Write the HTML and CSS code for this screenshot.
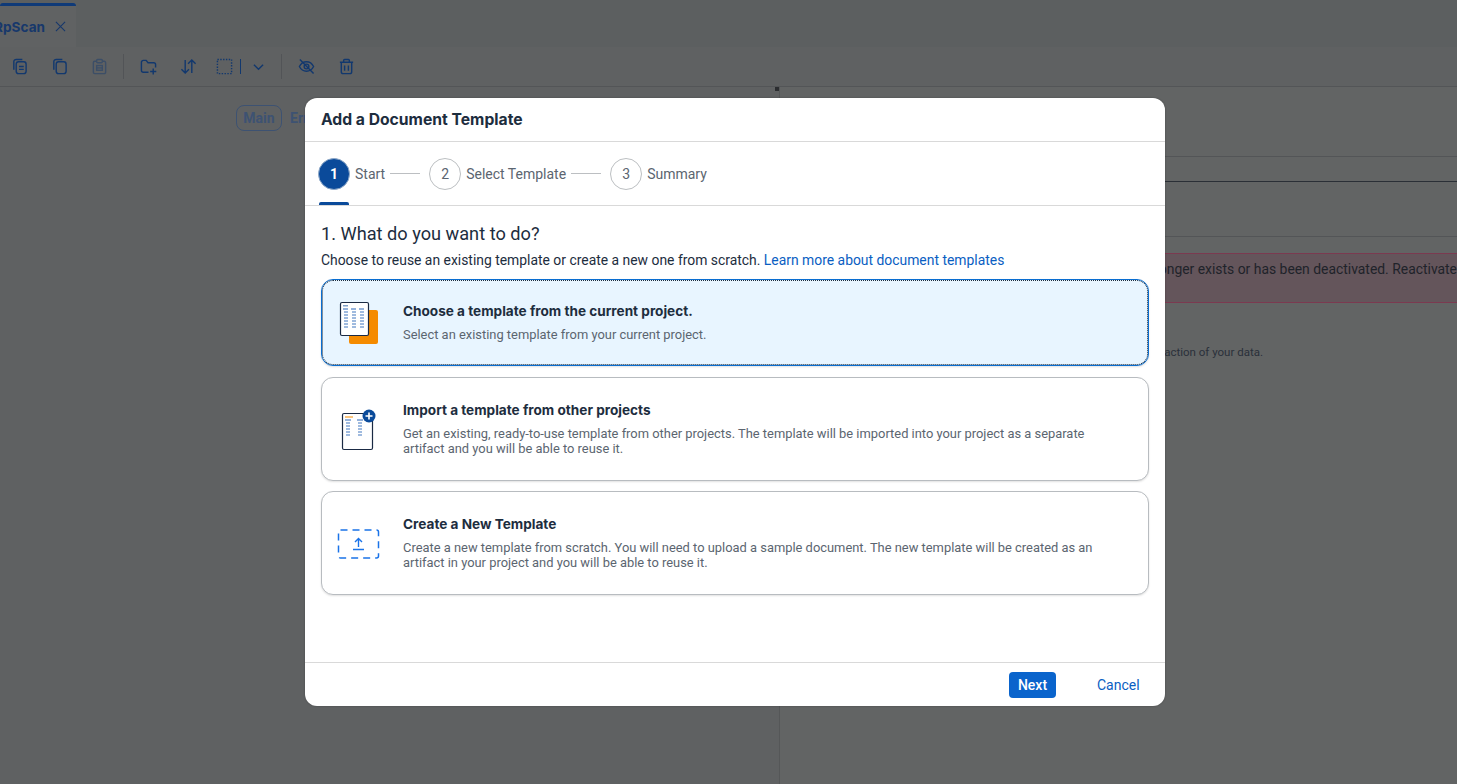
FILE: index.html
```html
<!DOCTYPE html>
<html lang="en">
<head>
<meta charset="utf-8">
<title>Add a Document Template</title>
<link rel="stylesheet" href="styles.css">
</head>
<body>
<div class="app">
  <header class="tabbar">
    <div class="tab"><span class="tab-name">RpScan</span>
      <svg class="tab-close" viewBox="0 0 12 12"><path d="M1 1l10 10M11 1L1 11"/></svg>
    </div>
  </header>
  <nav class="toolbar">
    <svg class="tool" viewBox="0 0 18 18"><path d="M3 12.500V4a2.500 2.500 0 0 1 2.500-2.500H12"/><rect x="5.500" y="4" width="10.500" height="12.500" rx="2.500"/><path d="M8.500 9h5M8.500 12h5"/></svg>
    <svg class="tool gap40" viewBox="0 0 18 18"><path d="M3 12.500V4a2.500 2.500 0 0 1 2.500-2.500H12"/><rect x="5.500" y="4" width="10.500" height="12.500" rx="2.500"/></svg>
    <svg class="tool gap40 dim" viewBox="0 0 18 18"><path d="M6 3.500H4a1.500 1.500 0 0 0-1.500 1.500v10A1.500 1.500 0 0 0 4 16.500h10a1.500 1.500 0 0 0 1.500-1.500V5A1.500 1.500 0 0 0 14 3.500h-2"/><rect x="6" y="1.500" width="6" height="3.500" rx="1"/><rect x="6" y="8" width="6" height="5"/><path d="M6 10.500h6"/></svg>
    <span class="sep"></span>
    <svg class="tool" viewBox="0 0 18 18"><path d="M9 15H3.500a2 2 0 0 1-2-2V4.500a2 2 0 0 1 2-2h3l2 2.500h6a2 2 0 0 1 2 2v3"/><path d="M14 11v6.500M10.750 14.250h6.500"/></svg>
    <svg class="tool gap40" viewBox="0 0 18 18"><path d="M5.500 2v14M1.500 12l4 4 4-4M12.500 16V2M8.500 6l4-4 4 4"/></svg>
    <svg class="tool select" viewBox="0 0 18 18"><rect x="1.500" y="1.500" width="15" height="15" stroke-dasharray="1.500 1.500"/></svg>
    <span class="mini-sep"></span>
    <svg class="chev" viewBox="0 0 12 8"><path d="M1 1.500l5 5 5-5"/></svg>
    <span class="sep second"></span>
    <svg class="tool" viewBox="0 0 18 18"><path d="M1.500 9S4 4 9 4s7.500 5 7.500 5-2.500 5-7.500 5-7.500-5-7.500-5z"/><circle cx="9" cy="9" r="2.500"/><path d="M2 1.500l14.500 15"/></svg>
    <svg class="tool gap40" viewBox="0 0 18 18"><path d="M2 4.500h14M6 4.500V2.500A1 1 0 0 1 7 1.500h4a1 1 0 0 1 1 1v2M3.500 4.500v10a2 2 0 0 0 2 2h7a2 2 0 0 0 2-2v-10M7 8v5.500M11 8v5.500"/></svg>
  </nav>
  <main class="workspace">
    <section class="pane-left">
      <span class="handle"></span>
      <div class="segments"><span class="seg-on">Main</span><span class="seg-off">Errors</span></div>
    </section>
    <section class="pane-right">
      <div class="rule rule-a"></div>
      <div class="rule rule-b"></div>
      <div class="rule rule-c"></div>
      <div class="alert">The schema no longer exists or has been deactivated. Reactivate</div>
      <p class="hint">Select a template to automate the extraction of your data.</p>
    </section>
  </main>
</div>

<div class="dialog" role="dialog" aria-label="Add a Document Template">
  <h1 class="dialog-title">Add a Document Template</h1>
  <div class="steps">
    <div class="step current"><span class="num">1</span><span class="step-label">Start</span></div>
    <span class="connector"></span>
    <div class="step"><span class="num">2</span><span class="step-label">Select Template</span></div>
    <span class="connector"></span>
    <div class="step"><span class="num">3</span><span class="step-label">Summary</span></div>
  </div>
  <div class="content">
    <h2 class="question">1. What do you want to do?</h2>
    <p class="intro">Choose to reuse an existing template or create a new one from scratch. <a class="link" href="#">Learn more about document templates</a></p>
    <div class="card selected">
      <svg class="card-icon" viewBox="0 0 44 44">
        <rect x="12" y="9" width="29" height="34" rx="2" fill="#f58b00"/>
        <rect x="3.500" y="1.500" width="28" height="33" rx="1.500" fill="#fff" stroke="#1a2a44" stroke-width="1.200"/>
        <rect x="6" y="4" width="5" height="1.500" fill="#7f9fc8"/>
        <path class="cols" d="M6 8h5M14 8h5M22 8h5"/>
        <path class="cols thin" d="M7 11h4M15 11h4M23 11h4M7 14h4M15 14h4M23 14h4M7 17h4M15 17h4M23 17h4M7 20h4M15 20h4M23 20h4M7 23h4M15 23h4M23 23h4M7 26h4M15 26h4M23 26h4"/>
      </svg>
      <div class="card-text">
        <div class="card-title">Choose a template from the current project.</div>
        <div class="card-desc">Select an existing template from your current project.</div>
      </div>
    </div>
    <div class="card tall second-card">
      <svg class="card-icon" viewBox="0 0 44 44">
        <rect x="5.500" y="6.500" width="30" height="36" rx="1.500" fill="#fff" stroke="#1a2a44" stroke-width="1.200"/>
        <rect x="8" y="9.500" width="8" height="1" fill="#f58b00"/>
        <path class="cols" d="M8 13h6M20 13h6"/>
        <path class="cols thin" d="M9 16h4M21 16h4M9 19h4M21 19h4M9 22h4M21 22h4M9 25h4M21 25h4M9 28h4M21 28h4"/>
        <circle cx="32" cy="9" r="6.500" fill="#0a4a9a"/>
        <path d="M32 5.500v7M28.500 9h7" stroke="#fff" stroke-width="1.600"/>
      </svg>
      <div class="card-text">
        <div class="card-title">Import a template from other projects</div>
        <div class="card-desc">Get an existing, ready-to-use template from other projects. The template will be imported into your project as a separate artifact and you will be able to reuse it.</div>
      </div>
    </div>
    <div class="card tall">
      <svg class="card-icon" viewBox="0 0 44 44">
        <rect x="1.500" y="9" width="40" height="28" rx="2" fill="none" stroke="#1a73e8" stroke-width="1.500" stroke-dasharray="7 5"/>
        <path d="M21.500 18v8M18 21l3.500-3.500 3.500 3.500M16 28.500h11" fill="none" stroke="#1a73e8" stroke-width="1.400"/>
      </svg>
      <div class="card-text">
        <div class="card-title">Create a New Template</div>
        <div class="card-desc">Create a new template from scratch. You will need to upload a sample document. The new template will be created as an artifact in your project and you will be able to reuse it.</div>
      </div>
    </div>
  </div>
  <footer class="dialog-footer">
    <button class="btn-next">Next</button>
    <button class="btn-cancel">Cancel</button>
  </footer>
</div>
</body>
</html>
```
FILE: styles.css
```css
* { box-sizing: border-box; }
html, body { margin: 0; height: 100%; overflow: hidden; }
body { background: #5f6162; font-family: Roboto, "Liberation Sans", sans-serif; color: #1a2a3a; }

.app { display: flex; flex-direction: column; height: 784px; }
.tabbar { height: 47px; background: #5c5f60; display: flex; flex: none; padding-top: 3px; }
.tab { width: 76px; background: #606263; border-top: 3px solid #0f3a78; border-radius: 3px 3px 0 0; display: flex; align-items: center; justify-content: flex-end; padding: 0 10px 0 0; gap: 10px; overflow: hidden; }
.tab-name { font: 700 13.600px Inter, "Liberation Sans", sans-serif; color: #17386b; white-space: nowrap; }
.tab-close { width: 11px; height: 11px; fill: none; stroke: #17386b; stroke-width: 1.200; flex: none; }

.toolbar { height: 40px; background: #5f6162; border-bottom: 1px solid #535557; display: flex; align-items: center; padding-left: 11px; flex: none; }
.tool { width: 17px; height: 17px; fill: none; stroke: #12386e; stroke-width: 1.500; flex: none; }
.gap40 { margin-left: 23px; }
.dim { opacity: .45; }
.sep { width: 1px; height: 25px; background: #525457; margin: 0 16px 0 15px; flex: none; }
.select { margin-left: 19px; }
.mini-sep { width: 1px; height: 15px; background: #12386e; margin-left: 7px; flex: none; }
.chev { width: 11px; height: 8px; fill: none; stroke: #12386e; stroke-width: 1.500; margin-left: 12px; flex: none; }
.sep.second { margin-left: 17px; }

.workspace { flex: 1; display: flex; min-height: 0; }
.pane-left { width: 780px; background: #5f6162; border-right: 1px solid #555758; padding: 18px 0 0 236px; flex: none; position: relative; }
.handle { position: absolute; left: 775px; top: 0; width: 4px; height: 4px; background: #2b2d30; }
.segments { display: flex; align-items: center; font-size: 14px; font-weight: 700; color: #3d5272; }
.seg-on { height: 26px; width: 46px; border: 1px solid #3d5272; border-radius: 8px; display: flex; align-items: center; justify-content: center; }
.seg-off { margin-left: 8px; }
.pane-right { flex: 1; background: #626464; position: relative; min-width: 0; overflow: hidden; display: flex; flex-direction: column; }
.rule { height: 1px; background: #535557; flex: none; }
.rule-a { margin-top: 69px; }
.rule-b { margin-top: 24px; background: #2a2f36; }
.rule-c { margin-top: 54px; }
.alert { margin-top: 16px; height: 50px; flex: none; background: #64555b; border-top: 1px solid #7b3a50; border-bottom: 1px solid #7b3a50; font-size: 13.900px; line-height: 16px; padding: 7px 0 0 0; white-space: nowrap; color: #1f232a; display: flex; justify-content: flex-end; }
.hint { margin: 42px 0 0 0; font-size: 11.500px; color: #2a303a; white-space: nowrap; width: 483px; text-align: right; }

.dialog { position: absolute; left: 305px; top: 98px; width: 860px; height: 608px; background: #fff; border-radius: 12px; box-shadow: 0 0 2px rgba(0,0,0,.3); display: flex; flex-direction: column; overflow: hidden; }
.dialog-title { margin: 0; height: 44px; flex: none; padding: 0 16px; display: flex; align-items: center; font: 700 15.700px Inter, "Liberation Sans", sans-serif; color: #1d2d3e; border-bottom: 1px solid #d9d9d9; }
.steps { height: 64px; flex: none; display: flex; align-items: center; padding: 0 0 0 13px; border-bottom: 1px solid #d9d9d9; }
.step { display: flex; align-items: center; gap: 5px; height: 100%; position: relative; }
.num { width: 32px; height: 32px; border-radius: 50%; border: 1px solid #bcbfc2; display: flex; align-items: center; justify-content: center; font-size: 14px; color: #5b6570; }
.step-label { font-size: 14px; color: #5b6570; }
.current .num { background: #0a4a9a; border-color: #8fa9c8; color: #fff; font-weight: 700; }
.current::after { content: ""; position: absolute; left: 1px; bottom: 0; width: 30px; height: 3px; background: #0a4a9a; border-radius: 2px 2px 0 0; }
.connector { width: 30px; height: 1px; background: #bcbfc2; margin: 0 9px 0 5px; flex: none; }

.content { flex: 1; padding: 16px 16px 0; }
.question { margin: 0; font-size: 18.200px; line-height: 24px; font-weight: 400; color: #1d2d3e; }
.intro { margin: 5px 0 0; font-size: 13.900px; line-height: 18px; color: #1d2d3e; }
.link { color: #0a5ec2; text-decoration: none; }

.card { display: flex; align-items: center; border: 1px solid #b8bcc0; border-radius: 12px; background: #fff; margin-top: 10px; padding: 0 15px; box-shadow: 0 1px 2px rgba(0,0,0,.12); }
.card.selected { height: 87px; background: #e8f5ff; border: 1px solid #0a6ed1; outline: 1px dotted #1d2d3e; outline-offset: -2px; }
.card.tall { height: 104px; }
.second-card { margin-top: 11px; }
.card-icon { width: 44px; height: 44px; flex: none; }
.cols { stroke: #2a66b8; stroke-width: 1; fill: none; }
.thin { stroke-width: .9; }
.card-text { margin-left: 22px; min-width: 0; max-width: 700px; padding-bottom: 1px; }
.card-title { font: 700 13.600px/18px Inter, "Liberation Sans", sans-serif; color: #1d2d3e; }
.card-desc { margin-top: 7px; font-size: 12.900px; line-height: 15px; color: #5b6570; }

.dialog-footer { height: 44px; flex: none; border-top: 1px solid #d9d9d9; display: flex; align-items: center; justify-content: flex-end; padding: 0 25px 0 0; }
.btn-next { width: 47px; height: 26px; border: 0; border-radius: 4px; background: #0a64cc; color: #fff; font: 500 14px Roboto, "Liberation Sans", sans-serif; padding: 0; }
.btn-cancel { width: 84px; height: 26px; border: 0; background: none; color: #0a5ec2; font: 400 14px Roboto, "Liberation Sans", sans-serif; padding: 0 0 0 41px; text-align: left; white-space: nowrap; }
```
